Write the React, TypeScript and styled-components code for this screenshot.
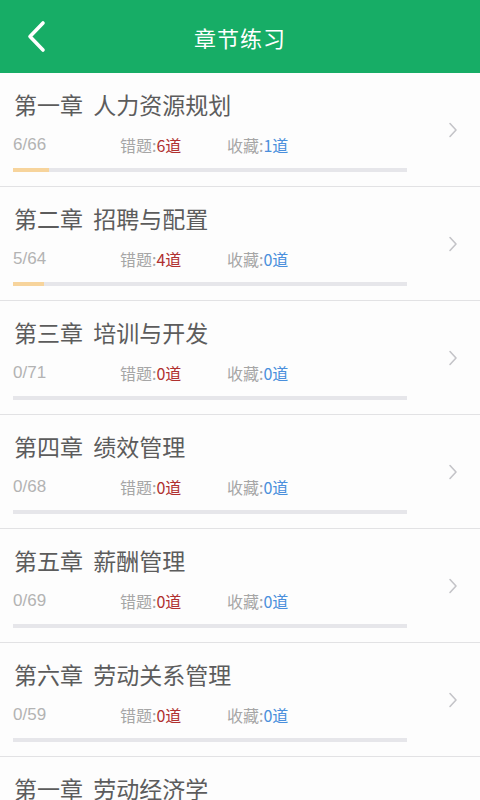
import React from 'react';
import styled, {createGlobalStyle} from 'styled-components';

const GlobalStyle = createGlobalStyle`
  html, body {
    margin: 0;
    padding: 0;
    background: #fdfdfd;
  }
  body {
    font-family: "Noto Sans CJK SC", "Liberation Sans", sans-serif;
    -webkit-font-smoothing: antialiased;
  }
`;

const Page = styled.div`
  width: 480px;
  height: 800px;
  overflow: hidden;
  background: #fdfdfd;
`;

const Header = styled.header`
  height: 73px;
  background: #17ad66;
  display: flex;
  align-items: center;
  justify-content: center;
  position: relative;
`;

const BackButton = styled.button`
  position: absolute;
  left: 20px;
  top: 16px;
  width: 40px;
  height: 40px;
  padding: 0;
  border: none;
  background: transparent;
  display: flex;
  align-items: center;
  justify-content: center;
`;

const Title = styled.h1`
  margin: 0;
  color: #ffffff;
  font-size: 22px;
  font-weight: 400;
  letter-spacing: 1px;
  line-height: 1;
`;

const Row = styled.div`
  display: flex;
  align-items: center;
  height: 113px;
  border-bottom: 1px solid #e2e2e4;
  padding-left: 13px;
`;

const Body = styled.div`
  width: 394px;
  display: flex;
  flex-direction: column;
`;

const ChapterName = styled.div`
  margin-top: 19px;
  padding-left: 1px;
  font-size: 23px;
  line-height: 23px;
  word-spacing: 5px;
  color: #5c5c5c;
  white-space: nowrap;
`;

const Stats = styled.div`
  margin-top: 19px;
  display: grid;
  grid-template-columns: 107px 107px auto;
  font-size: 16px;
  line-height: 20px;
  color: #a6a6a6;
`;

const Count = styled.span`
  font-family: "Liberation Sans", "Noto Sans CJK SC", sans-serif;
  font-size: 17px;
  color: #b3b3b3;
`;

const Num = styled.span<{ tone: 'red' | 'blue' }>`
  color: ${p => (p.tone === 'red' ? '#b0302f' : '#4a8fdc')};
`;

const Track = styled.div`
  margin-top: 13px;
  margin-bottom: 14px;
  height: 4px;
  background: #e6e6ea;
  overflow: hidden;
`;

const Fill = styled.div`
  height: 100%;
  background: #f7d49c;
`;

const Arrow = styled.div`
  flex: 1;
  display: flex;
  justify-content: flex-end;
  padding-right: 22px;
`;

interface Chapter {
    name: string,
    done: number,
    total: number,
    wrong: number,
    fav: number,
}

const chapters: Chapter[] = [
    {name: '第一章 人力资源规划', done: 6, total: 66, wrong: 6, fav: 1},
    {name: '第二章 招聘与配置', done: 5, total: 64, wrong: 4, fav: 0},
    {name: '第三章 培训与开发', done: 0, total: 71, wrong: 0, fav: 0},
    {name: '第四章 绩效管理', done: 0, total: 68, wrong: 0, fav: 0},
    {name: '第五章 薪酬管理', done: 0, total: 69, wrong: 0, fav: 0},
    {name: '第六章 劳动关系管理', done: 0, total: 59, wrong: 0, fav: 0},
    {name: '第一章 劳动经济学', done: 0, total: 60, wrong: 0, fav: 0},
];

const ChapterRow = ({c}: { c: Chapter }) => (
    <Row>
        <Body>
            <ChapterName>{c.name}</ChapterName>
            <Stats>
                <Count>{c.done}/{c.total}</Count>
                <span>错题:<Num tone={'red'}>{c.wrong}道</Num></span>
                <span>收藏:<Num tone={'blue'}>{c.fav}道</Num></span>
            </Stats>
            <Track>
                <Fill style={{width: `${(c.done / c.total) * 100}%`}}/>
            </Track>
        </Body>
        <Arrow>
            <svg width="10" height="16" viewBox="0 0 10 16">
                <path d="M2 1.5 L8 8 L2 14.5" fill="none" stroke="#c4c4c8" strokeWidth="1.6"
                      strokeLinecap="round" strokeLinejoin="round"/>
            </svg>
        </Arrow>
    </Row>
);

export default function App() {
    return (
        <Page>
            <GlobalStyle/>
            <Header>
                <BackButton aria-label={'返回'}>
                    <svg width="40" height="40" viewBox="0 0 40 40">
                        <path d="M23 7 L10 20.5 L23 34" fill="none" stroke="#ffffff" strokeWidth="3.6"
                              strokeLinecap="round" strokeLinejoin="round"/>
                    </svg>
                </BackButton>
                <Title>章节练习</Title>
            </Header>
            {chapters.map((c, i) => <ChapterRow key={i} c={c}/>)}
        </Page>
    );
}
